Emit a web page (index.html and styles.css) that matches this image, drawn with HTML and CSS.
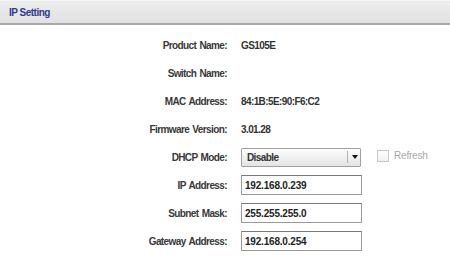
FILE: index.html
```html
<!DOCTYPE html>
<html lang="en">
<head>
    <meta charset="UTF-8">
    <title>IP Setting</title>
    <link rel="stylesheet" href="styles.css">
</head>
<body>
    <div class="panel">
        <div class="panel-header">IP Setting</div>
        <div class="panel-body">
            <div class="row">
                <label class="row-label">Product Name:</label>
                <span class="row-value">GS105E</span>
            </div>
            <div class="row">
                <label class="row-label">Switch Name:</label>
                <span class="row-value"></span>
            </div>
            <div class="row">
                <label class="row-label">MAC Address:</label>
                <span class="row-value">84:1B:5E:90:F6:C2</span>
            </div>
            <div class="row">
                <label class="row-label">Firmware Version:</label>
                <span class="row-value">3.01.28</span>
            </div>
            <div class="row">
                <label class="row-label">DHCP Mode:</label>
                <div class="row-inline">
                    <div class="select">
                        <span class="select-text">Disable</span>
                        <span class="select-arrow"></span>
                    </div>
                    <label class="refresh">
                        <span class="checkbox"></span>
                        Refresh
                    </label>
                </div>
            </div>
            <div class="row">
                <label class="row-label">IP Address:</label>
                <input class="field" type="text" value="192.168.0.239">
            </div>
            <div class="row">
                <label class="row-label">Subnet Mask:</label>
                <input class="field" type="text" value="255.255.255.0">
            </div>
            <div class="row">
                <label class="row-label">Gateway Address:</label>
                <input class="field" type="text" value="192.168.0.254">
            </div>
        </div>
    </div>
</body>
</html>
```

FILE: styles.css
```css
/* Geral */
body {
    margin: 0;
    padding: 0;
    background: #fff;
    font-family: "Liberation Sans", Arial, sans-serif;
    font-size: 10px;
    color: #333;
}

.panel {
    width: 450px;
}

.panel-header {
    height: 22px;
    line-height: 23px;
    padding-left: 9px;
    background: linear-gradient(#ededed, #e1e1e1);
    border-top: 1px solid #f4f4f4;
    border-bottom: 2px solid #a8a8a8;
    font-size: 10px;
    letter-spacing: -0.5px;
    font-weight: bold;
    color: #2b3a8f;
}

.panel-body {
    padding-top: 6px;
}

.row {
    display: grid;
    grid-template-columns: 227px auto;
    column-gap: 14px;
    align-items: center;
    height: 28px;
}

.row-label {
    text-align: right;
    font-weight: bold;
    letter-spacing: -0.6px;
    word-spacing: 1px;
    color: #383838;
}

.row-value {
    font-weight: bold;
    letter-spacing: -0.6px;
    color: #333;
}

.row-inline {
    display: flex;
    align-items: center;
}

/* Select */
.select {
    display: flex;
    align-items: center;
    width: 118px;
    height: 17px;
    border: 1px solid #a0a0a0;
    border-radius: 1px;
    background: linear-gradient(#fdfdfd, #e4e4e4);
}

.select-text {
    flex: 1;
    padding-left: 5px;
    font-weight: bold;
    letter-spacing: -0.6px;
}

.select-arrow {
    position: relative;
    width: 12px;
    height: 12px;
    border-left: 1px solid #b0b0b0;
}

.select-arrow::after {
    content: "";
    position: absolute;
    left: 4px;
    top: 4px;
    border-left: 3px solid transparent;
    border-right: 3px solid transparent;
    border-top: 4px solid #111;
}

.refresh {
    display: flex;
    align-items: center;
    gap: 5px;
    margin-left: 16px;
    margin-top: -3px;
    letter-spacing: -0.2px;
    color: #a8a8a8;
}

.checkbox {
    width: 10px;
    height: 10px;
    border: 1px solid #c8c8c8;
    background: linear-gradient(#fff, #f0f0f0);
}

/* Campos */
.field {
    box-sizing: border-box;
    width: 121px;
    height: 20px;
    margin: 0;
    padding: 0 3px;
    border: 1px solid #9a9a9a;
    border-top-color: #7a7a7a;
    font-family: "Liberation Sans", Arial, sans-serif;
    font-size: 10px;
    font-weight: bold;
    letter-spacing: -0.2px;
    color: #222;
}
```
